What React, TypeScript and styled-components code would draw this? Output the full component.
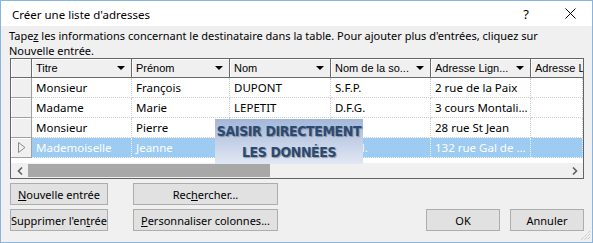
import { FC } from 'react'
import styled, { createGlobalStyle } from 'styled-components'

const GlobalStyle = createGlobalStyle`
	html, body {
		margin: 0;
		padding: 0;
		background: #ffffff;
	}
`

const uiFont = `'Noto Sans', 'Open Sans', sans-serif`
const gridFont = `'Liberation Sans', Arial, sans-serif`

const Window = styled.div`
	width: 593px;
	height: 243px;
	box-sizing: border-box;
	border: 1px solid #86b5e3;
	background: #f0f0f0;
	display: flex;
	flex-direction: column;
	font-family: ${uiFont};
	font-size: 11px;
	color: #000;
	position: relative;
	overflow: hidden;
`

const TitleBar = styled.div`
	height: 25px;
	background: #ffffff;
	display: flex;
	align-items: center;
	padding: 0 0 0 11px;
`

const Title = styled.span`
	flex: 1;
	padding-top: 1px;
	font-size: 11.5px;
`

const TitleButton = styled.span`
	width: 44px;
	height: 25px;
	display: flex;
	align-items: center;
	justify-content: center;
	font-size: 13px;
`

const Intro = styled.p`
	margin: 2px 0 0;
	padding: 0 8px;
	line-height: 15px;
	height: 30px;
	white-space: nowrap;
	font-size: 11px;
`

const Grid = styled.div`
	position: relative;
	margin-left: 9px;
	width: 574px;
	height: 121px;
	box-sizing: border-box;
	border: 1px solid #646464;
	background: #ffffff;
	display: flex;
	flex-direction: column;
	overflow: hidden;
`

const Row = styled.div<{ $h: number }>`
	display: flex;
	height: ${({ $h }) => $h}px;
	flex-shrink: 0;
`

const HeaderCell = styled.div<{ $w: number; $last?: boolean }>`
	width: ${({ $w }) => $w}px;
	flex-shrink: 0;
	box-sizing: border-box;
	background: #f0f0f0;
	border-right: ${({ $last }) => ($last ? 'none' : '1px solid #6a6a6a')};
	border-bottom: 1px solid #6a6a6a;
	box-shadow: inset 1px 1px 0 #ffffff;
	display: flex;
	align-items: center;
	padding: 0 ${({ $last }) => ($last ? 0 : 6)}px 0 4px;
	font-family: ${gridFont};
	font-size: 11px;
	white-space: nowrap;
	overflow: hidden;
`

const HeaderLabel = styled.span`
	flex: 1;
	overflow: hidden;
	white-space: nowrap;
`

const DropArrow = styled.span`
	width: 0;
	height: 0;
	border-left: 4px solid transparent;
	border-right: 4px solid transparent;
	border-top: 4px solid #000;
	margin-left: 4px;
`

const RowHead = styled.div<{ $w: number }>`
	width: ${({ $w }) => $w}px;
	flex-shrink: 0;
	box-sizing: border-box;
	background: #f0f0f0;
	border-right: 1px solid #a0a0a0;
	border-bottom: 1px solid #a0a0a0;
	box-shadow: inset 1px 1px 0 #ffffff;
	display: flex;
	align-items: center;
	justify-content: center;
`

const Cell = styled.div<{ $w: number; $sel?: boolean }>`
	width: ${({ $w }) => $w}px;
	flex-shrink: 0;
	box-sizing: border-box;
	padding: 0 4px;
	display: flex;
	align-items: center;
	white-space: nowrap;
	overflow: hidden;
	background: ${({ $sel }) => ($sel ? '#9dcbf1' : '#ffffff')};
	color: ${({ $sel }) => ($sel ? '#ffffff' : '#000000')};
	border-right: 1px dotted ${({ $sel }) => ($sel ? '#e8f3fc' : '#cfcfcf')};
	border-bottom: 1px dotted ${({ $sel }) => ($sel ? '#e8f3fc' : '#cfcfcf')};
	font-size: 11.5px;
`

const Filler = styled.div`
	flex: 1;
	background: #ffffff;
`

const HScroll = styled.div`
	height: 15px;
	flex-shrink: 0;
	display: flex;
	align-items: stretch;
	background: #f0f0f0;
`

const ScrollArrow = styled.div`
	width: 17px;
	display: flex;
	align-items: center;
	justify-content: center;
`

const Thumb = styled.div`
	width: 242px;
	margin: 1px 0;
	background: #a8a8a8;
`

const Track = styled.div`
	flex: 1;
`

const Overlay = styled.div`
	position: absolute;
	left: 204px;
	top: 60px;
	width: 148px;
	height: 45px;
	background: linear-gradient(#a3b7d9, #e2e8f3);
	display: flex;
	flex-direction: column;
	align-items: center;
	justify-content: center;
	font-family: 'DejaVu Sans Condensed', 'Liberation Sans Narrow', sans-serif;
	font-stretch: condensed;
	font-weight: bold;
	font-size: 14px;
	line-height: 21px;
	color: #2b4a73;
	text-shadow: 1px 1px 1px rgba(0, 0, 0, 0.3);
	letter-spacing: -0.4px;
`

const Footer = styled.div`
	display: flex;
	flex-direction: column;
	gap: 4px;
	padding: 4px 0 0 9px;
`

const ButtonRow = styled.div`
	display: flex;
	align-items: center;
`

const Button = styled.button<{ $w: number; $gap?: number }>`
	width: ${({ $w }) => $w}px;
	height: 22px;
	margin-right: ${({ $gap }) => $gap ?? 0}px;
	box-sizing: border-box;
	background: #e1e1e1;
	border: 1px solid #adadad;
	font-family: ${uiFont};
	font-size: 11px;
	color: #000;
	padding: 0;
	white-space: nowrap;
`

const Spacer = styled.div`
	flex: 1;
`

const Grip = styled.svg`
	position: absolute;
	right: 1px;
	bottom: 1px;
`

const cols = [100, 98, 101, 100, 100, 52]
const headers = ['Titre', 'Prénom', 'Nom', 'Nom de la so...', 'Adresse Lign...', 'Adresse Li']
const rows = [
	['Monsieur', 'François', 'DUPONT', 'S.F.P.', '2 rue de la Paix', ''],
	['Madame', 'Marie', 'LEPETIT', 'D.F.G.', '3 cours Montali...', ''],
	['Monsieur', 'Pierre', '', '', '28 rue St Jean', ''],
	['Mademoiselle', 'Jeanne', '', 'S.H.N.', '132 rue Gal de ...', ''],
]

const App: FC = () => (
	<>
		<GlobalStyle />
		<Window>
			<TitleBar>
				<Title>Créer une liste d'adresses</Title>
				<TitleButton>?</TitleButton>
				<TitleButton>
					<svg width="11" height="11" viewBox="0 0 11 11">
						<path d="M0.5 0.5 L10.5 10.5 M10.5 0.5 L0.5 10.5" stroke="#000" strokeWidth="1" />
					</svg>
				</TitleButton>
			</TitleBar>
			<Intro>
				Tape<u>z</u> les informations concernant le destinataire dans la table. Pour ajouter plus d'entrées, cliquez sur
				<br />
				Nouvelle entrée.
			</Intro>
			<Grid>
				<Row $h={19}>
					<HeaderCell $w={21} />
					{headers.map((h, i) => (
						<HeaderCell key={h} $w={cols[i]} $last={i === 5}>
							<HeaderLabel>{h}</HeaderLabel>
							{i < 5 && <DropArrow />}
						</HeaderCell>
					))}
				</Row>
				{rows.map((r, ri) => {
					const sel = ri === 3
					return (
						<Row key={ri} $h={20}>
							<RowHead $w={21}>
								{sel && (
									<svg width="9" height="11" viewBox="0 0 9 11">
										<path d="M1.5 0.5 L8 5.5 L1.5 10.5 Z" fill="none" stroke="#8a8a8a" strokeWidth="1" />
									</svg>
								)}
							</RowHead>
							{r.map((v, ci) => (
								<Cell key={ci} $w={cols[ci]} $sel={sel}>
									{v}
								</Cell>
							))}
						</Row>
					)
				})}
				<Filler />
				<HScroll>
					<ScrollArrow>
						<svg width="6" height="8" viewBox="0 0 6 8">
							<path d="M5 0.5 L1.5 4 L5 7.5" fill="none" stroke="#606060" strokeWidth="1.6" />
						</svg>
					</ScrollArrow>
					<Thumb />
					<Track />
					<ScrollArrow>
						<svg width="6" height="8" viewBox="0 0 6 8">
							<path d="M1 0.5 L4.5 4 L1 7.5" fill="none" stroke="#606060" strokeWidth="1.6" />
						</svg>
					</ScrollArrow>
				</HScroll>
				<Overlay>
					<span>SAISIR DIRECTEMENT</span>
					<span>LES DONNÉES</span>
				</Overlay>
			</Grid>
			<Footer>
				<ButtonRow>
					<Button $w={98} $gap={25}>
						<u>N</u>ouvelle entrée
					</Button>
					<Button $w={145}>
						Rec<u>h</u>ercher...
					</Button>
				</ButtonRow>
				<ButtonRow>
					<Button $w={98} $gap={25}>
						Supprimer l'en<u>t</u>rée
					</Button>
					<Button $w={145}>
						<u>P</u>ersonnaliser colonnes...
					</Button>
					<Spacer />
					<Button $w={74} $gap={10}>
						OK
					</Button>
					<Button $w={74} $gap={8}>
						Annuler
					</Button>
				</ButtonRow>
			</Footer>
			<Grip width="10" height="10" viewBox="0 0 10 10">
				<path d="M9 3 L3 9 M9 6 L6 9 M9 0 L0 9" stroke="#b0b0b0" strokeWidth="1" strokeDasharray="1 1" />
			</Grip>
		</Window>
	</>
)

export default App
